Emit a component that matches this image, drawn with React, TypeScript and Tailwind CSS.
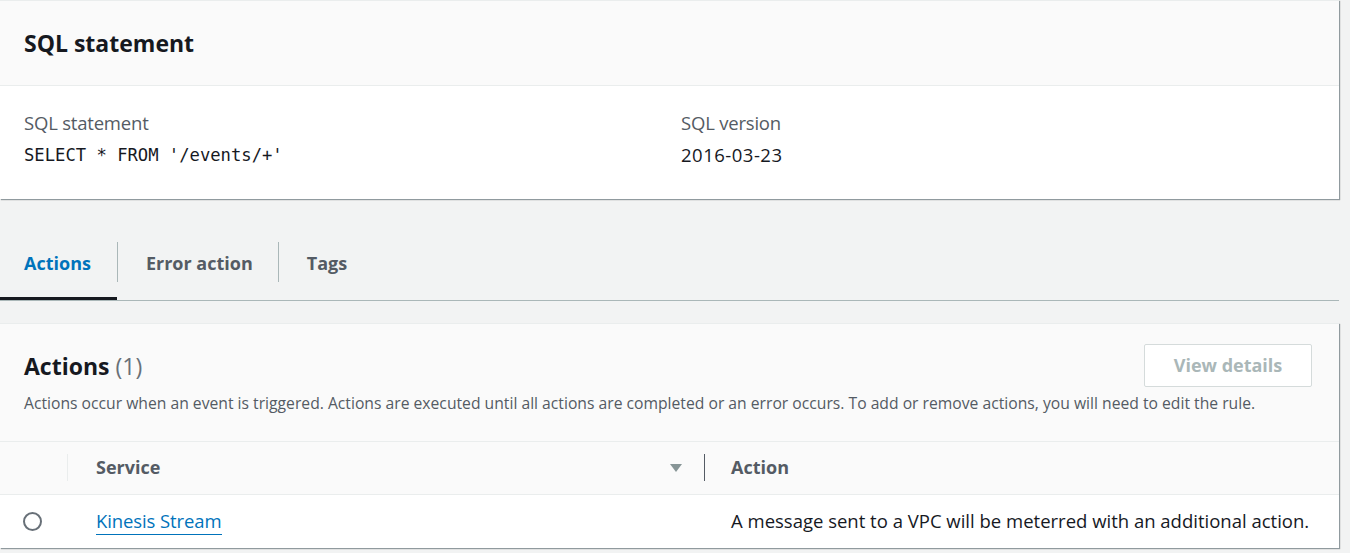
export default function App() {
  return (
    <div className="min-h-[553px] bg-[#f2f3f3] pr-[11px] font-['Open_Sans',sans-serif] text-[#16191f]">
      <section className="bg-white shadow-[1px_1px_1px_0_rgba(0,28,36,0.3),1px_1px_1px_0_rgba(0,28,36,0.15)] border-t border-[#eaeded]">
        <div className="h-[85px] flex items-center px-6 bg-[#fafafa] border-b border-[#eaeded]">
          <h2 className="text-[23px] font-bold">SQL statement</h2>
        </div>
        <div className="grid grid-cols-[657px_1fr] px-6 pt-[24px] pb-[31px]">
          <div>
            <div className="text-[18.5px] text-[#545b64] leading-[26px] tracking-[-0.2px]">SQL statement</div>
            <div className="mt-[6px] font-['DejaVu_Sans_Mono',monospace] text-[17.2px] leading-[26px]">
              SELECT * FROM '/events/+'
            </div>
          </div>
          <div>
            <div className="text-[18.5px] text-[#545b64] leading-[26px] tracking-[-0.2px]">SQL version</div>
            <div className="mt-[6px] text-[18.5px] leading-[26px] tracking-[0.5px]">2016-03-23</div>
          </div>
        </div>
      </section>

      <div className="mt-[43px] flex border-b border-[#aab7b8]">
        <button className="h-[58px] pl-6 pr-[26px] text-[18px] font-bold text-[#0073bb] border-b-[3px] border-[#16191f] -mb-px">
          <span className="block pb-[12px]">Actions</span>
        </button>
        <div className="w-px h-10 bg-[#aab7b8]" />
        <button className="h-[58px] pl-7 pr-[25px] text-[18px] font-bold text-[#545b64]">
          <span className="block pb-[15px]">Error action</span>
        </button>
        <div className="w-px h-10 bg-[#aab7b8]" />
        <button className="h-[58px] pl-7 pr-7 text-[18px] font-bold text-[#545b64]">
          <span className="block pb-[15px]">Tags</span>
        </button>
      </div>

      <section className="mt-[22px] bg-white shadow-[1px_1px_1px_0_rgba(0,28,36,0.3),1px_1px_1px_0_rgba(0,28,36,0.15)] border-t border-[#eaeded]">
        <div className="h-[118px] bg-[#fafafa] px-6 pt-5 border-b border-[#eaeded]">
          <div className="flex items-center justify-between">
            <h2 className="text-[23px] font-bold leading-[34px]">
              Actions <span className="font-normal text-[#687078]">(1)</span>
            </h2>
            <button
              disabled
              className="shrink-0 mr-[3px] w-[168px] h-[43px] rounded-[2px] border border-[#d5dbdb] bg-white text-[18px] font-bold text-[#aab7b8]"
            >
              View details
            </button>
          </div>
          <p className="mt-[5px] text-[15.7px] text-[#545b64] leading-[22px] whitespace-nowrap">
            Actions occur when an event is triggered. Actions are executed until all actions are completed or an error occurs. To add or remove actions, you will need to edit the rule.
          </p>
        </div>
        <table className="w-full border-collapse">
          <thead>
            <tr className="bg-[#fafafa] h-[52px] border-b border-[#eaeded]">
              <th className="w-[68px] p-0">
                <div className="ml-auto w-px h-[27px] bg-[#eaeded]" />
              </th>
              <th className="p-0 text-left">
                <div className="flex items-center">
                  <span className="pl-7 text-[18px] font-bold text-[#545b64]">Service</span>
                  <svg className="ml-auto mr-[21px]" width="14" height="10" viewBox="0 0 14 10">
                    <path d="M1 1h12L7 9z" fill="#879596" />
                  </svg>
                  <div className="w-px h-[27px] bg-[#545b64]" />
                </div>
              </th>
              <th className="p-0 text-left w-[634px] pl-[26px] text-[18px] font-bold text-[#545b64]">Action</th>
            </tr>
          </thead>
          <tbody>
            <tr className="h-[54px]">
              <td className="p-0">
                <div className="ml-[23px] w-[19px] h-[19px] rounded-full border-2 border-[#687078]" />
              </td>
              <td className="p-0 pl-7">
                <a href="#" className="text-[18.5px] text-[#0073bb] border-b border-[#0073bb] pb-[1px] tracking-[-0.1px]">
                  Kinesis Stream
                </a>
              </td>
              <td className="p-0 pl-[26px] text-[18.5px]">A message sent to a VPC will be meterred with an additional action.</td>
            </tr>
          </tbody>
        </table>
      </section>
    </div>
  );
}
